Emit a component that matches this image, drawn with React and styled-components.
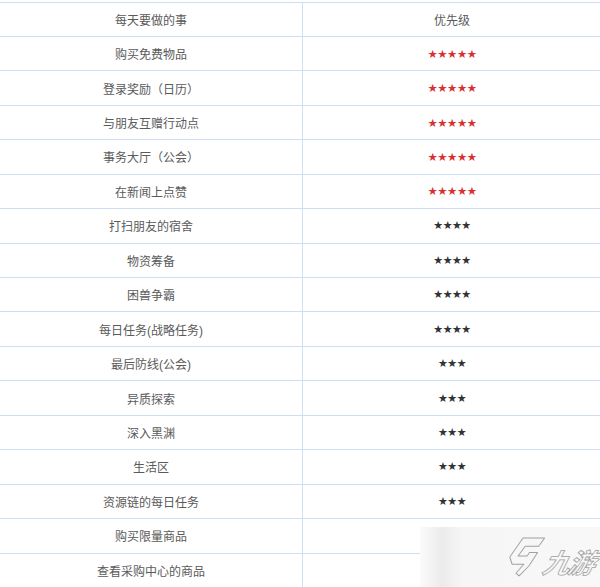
import React from 'react';
import styled, { createGlobalStyle } from 'styled-components';

const rows = [
    ['购买免费物品', 5],
    ['登录奖励（日历）', 5],
    ['与朋友互赠行动点', 5],
    ['事务大厅（公会）', 5],
    ['在新闻上点赞', 5],
    ['打扫朋友的宿舍', 4],
    ['物资筹备', 4],
    ['困兽争霸', 4],
    ['每日任务(战略任务)', 4],
    ['最后防线(公会)', 3],
    ['异质探索', 3],
    ['深入黑渊', 3],
    ['生活区', 3],
    ['资源链的每日任务', 3],
    ['购买限量商品', 0],
    ['查看采购中心的商品', 0],
];

const App = () => {
    return (
        <>
            <GlobalStyle />
            <Page>
                <Table>
                    <Row>
                        <Cell>每天要做的事</Cell>
                        <Cell $right>优先级</Cell>
                    </Row>
                    {rows.map(([task, stars]) => (
                        <Row key={task}>
                            <Cell>{task}</Cell>
                            <Cell $right>
                                {stars > 0 && <Stars $red={stars === 5}>{'★'.repeat(stars)}</Stars>}
                            </Cell>
                        </Row>
                    ))}
                </Table>
                <Watermark>
                    <LogoMark viewBox="0 0 40 48">
                        <path
                            d="M13 3 L37 3 L32 12 L17 12 L11 23 L21 23 L23 19 L32 19 L25 34 L16 45 L12 42 L19 32 L6 32 L2 24 Z"
                            fill="none"
                            stroke="#a0a0a0"
                            strokeWidth="1.1"
                            strokeLinejoin="round"
                        />
                    </LogoMark>
                    <LogoText>九游</LogoText>
                </Watermark>
            </Page>
        </>
    );
};

const GlobalStyle = createGlobalStyle`
    html, body {
        margin: 0;
        padding: 0;
        background: #ffffff;
    }
    body {
        font-family: "Liberation Sans", "Noto Sans CJK SC", sans-serif;
    }
`;

const Page = styled.div`
    position: relative;
    width: 600px;
    height: 587px;
    overflow: hidden;
    padding-top: 1.5px;
    box-sizing: border-box;
`;

const Table = styled.div`
    display: flex;
    flex-direction: column;
`;

const Row = styled.div`
    display: grid;
    grid-template-columns: 302px 1fr;
    height: 34.45px;
    box-sizing: border-box;
    border-top: 1px solid #cddff5;
`;

const Cell = styled.div`
    display: flex;
    align-items: center;
    justify-content: center;
    font-size: 12px;
    color: #5a5a5a;
    border-left: ${({ $right }) => ($right ? '1px solid #cddff5' : 'none')};
    padding-left: ${({ $right }) => ($right ? '1px' : '0')};
`;

const Stars = styled.span`
    font-family: "DejaVu Sans", sans-serif;
    font-size: ${({ $red }) => ($red ? '11.5px' : '11px')};
    letter-spacing: -0.5px;
    color: ${({ $red }) => ($red ? '#d83030' : '#333333')};
`;

const Watermark = styled.div`
    position: absolute;
    left: 420px;
    top: 527px;
    width: 180px;
    height: 60px;
    display: flex;
    align-items: center;
    padding-left: 88px;
    box-sizing: border-box;
    background: linear-gradient(90deg, #fbfbfb 0px, #ebebeb 22px, #f6f6f6 42px, #f8f8f8 100%);
`;

const LogoMark = styled.svg`
    flex: none;
    width: 36px;
    height: 44px;
    transform: skewX(-10deg);
`;

const LogoText = styled.span`
    flex: none;
    font-family: "Noto Sans CJK SC", sans-serif;
    font-size: 27px;
    font-weight: 700;
    font-style: italic;
    color: transparent;
    -webkit-text-stroke: 0.8px #a0a0a0;
    letter-spacing: -2px;
    transform: skewX(-14deg);
    margin-top: 8px;
`;

export default App;
